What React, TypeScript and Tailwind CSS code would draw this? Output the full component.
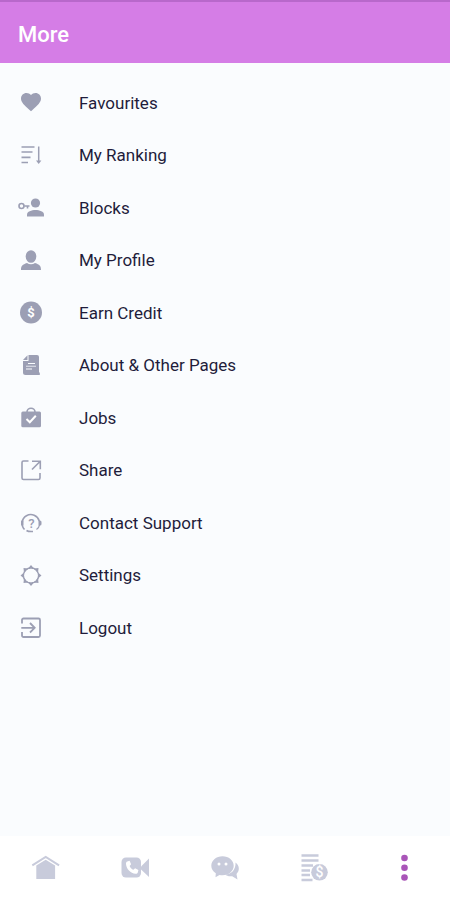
import type { ReactNode } from "react";

interface Item {
  label: string;
  icon: ReactNode;
}

const menuItems: Item[] = [
  {
    label: "Favourites",
    icon: (
      <path
        transform="translate(3 2)"
        d="M12 21.35l-1.45-1.32C5.4 15.36 2 12.28 2 8.5 2 5.42 4.42 3 7.5 3c1.74 0 3.41.81 4.5 2.09C13.09 3.81 14.76 3 16.5 3 19.58 3 22 5.42 22 8.5c0 3.78-3.4 6.86-8.55 11.54z"
      />
    ),
  },
  {
    label: "My Ranking",
    icon: (
      <g>
        <path d="M5.5 6H18.5M5.5 11H16.5M5.5 16.3H14.5M5.5 21.5H12" fill="none" stroke="currentColor" strokeWidth="1.7" />
        <path d="M22.7 5.5V21" fill="none" stroke="currentColor" strokeWidth="1.5" />
        <path d="M20 19.5h5.4l-2.7 3.5z" />
      </g>
    ),
  },
  {
    label: "Blocks",
    icon: (
      <g>
        <circle cx="19.5" cy="10" r="4.6" />
        <path d="M11 23.5v-2c0-3 4.5-4.5 8.5-4.5s8.5 1.5 8.5 4.5v2z" />
        <path d="M8.3 13H13.5M11.5 13V15.5" fill="none" stroke="currentColor" strokeWidth="1.6" />
        <circle cx="5.5" cy="13" r="2.5" fill="none" stroke="currentColor" strokeWidth="1.6" />
      </g>
    ),
  },
  {
    label: "My Profile",
    icon: (
      <g>
        <ellipse cx="15" cy="10.5" rx="5.3" ry="6.3" />
        <path d="M5 24C5 19.5 6.500 18.700 11 17c2.300 1.600 5.700 1.600 8 0 4.500 1.700 6 2.500 6 7z" />
      </g>
    ),
  },
  {
    label: "Earn Credit",
    icon: (
      <g>
        <circle cx="15" cy="14.5" r="11" />
        <text x="15" y="19" textAnchor="middle" className="fill-white text-[13px] font-bold">$</text>
      </g>
    ),
  },
  {
    label: "About & Other Pages",
    icon: (
      <g>
        <path d="M12.500 4H21a2 2 0 0 1 2 2v15.500h.8V24H9.500A2.500 2.500 0 0 1 7 21.500V10h5.500z" />
        <path d="M7 9L11.500 4.300V9z" />
        <path d="M12 12.500H19M10 18H16" fill="none" stroke="#fafcfe" strokeWidth="1" />
        <path d="M10 15.300H20" fill="none" stroke="#fafcfe" strokeWidth="1.300" opacity="0.600" />
      </g>
    ),
  },
  {
    label: "Jobs",
    icon: (
      <g>
        <rect x="5.300" y="7.500" width="19.700" height="15.700" rx="1.500" />
        <path d="M11 8a4 3.800 0 0 1 8 0" fill="none" stroke="currentColor" strokeWidth="1.600" />
        <path d="M10.500 15l3.300 3.200 6-6.400" fill="none" stroke="white" strokeWidth="2" />
      </g>
    ),
  },
  {
    label: "Share",
    icon: (
      <g fill="none" stroke="currentColor" strokeWidth="1.600">
        <path d="M12.500 5H7.500A1.500 1.500 0 0 0 6 6.500v15.500A1.500 1.500 0 0 0 7.500 23.500h15a1.500 1.500 0 0 0 1.500-1.500V17" />
        <path d="M16 5.300h8.300v8M24 5.500L16 13.500" />
      </g>
    ),
  },
  {
    label: "Contact Support",
    icon: (
      <g>
        <path d="M8.500 20.500A8.800 8.800 0 1 1 23.300 12M10.500 21.500q2 1.300 6.500 1" fill="none" stroke="currentColor" strokeWidth="1.600" />
        <path d="M22.500 11.500h1.500a1.500 1.500 0 0 1 1.500 1.500v2a1.500 1.500 0 0 1-1.500 1.500h-1.500zM6 11.500h1.500v5H6a1 1 0 0 1-1-1v-3a1 1 0 0 1 1-1z" />
        <path d="M23.500 16q-.5 3-3 4.500" fill="none" stroke="currentColor" strokeWidth="1.300" />
        <text x="15.500" y="18.500" textAnchor="middle" className="text-[13px] font-medium">?</text>
      </g>
    ),
  },
  {
    label: "Settings",
    icon: (
      <g>
        <circle cx="15" cy="14.500" r="7.500" fill="none" stroke="currentColor" strokeWidth="1.600" />
        <path d="M12 7.500l3-3.500 3 3.500zM12 21.500l3 3.500 3-3.500zM8 11.500l-3.500 3 3.500 3zM22 11.500l3.500 3-3.500 3zM8 12L7.500 7l5 .5zM22 12l.5-5-5 .5zM8 17l-.5 5 5-.5zM22 17l.5 5-5-.5z" />
        <circle cx="15" cy="14.500" r="6.700" fill="#fafcfe" />
      </g>
    ),
  },
  {
    label: "Logout",
    icon: (
      <g fill="none" stroke="currentColor" strokeWidth="1.800">
        <path d="M6 9.500V6A1.500 1.500 0 0 1 7.500 4.500h15A1.500 1.500 0 0 1 24 6v15.500a1.500 1.500 0 0 1-1.500 1.500h-15A1.500 1.500 0 0 1 6 21.500V18" />
        <path d="M5.300 13.800H18.500M14 9L18.700 13.800 14 18.500" />
      </g>
    ),
  },
];

const tabs: Item[] = [
  {
    label: "Home",
    icon: (
      <g>
        <path d="M3.300 13.300L16.700 5l13.400 8.300" fill="none" stroke="currentColor" strokeWidth="2" />
        <path d="M7.300 13.500l9.400-5.700 9.400 5.700V27H7.300z" />
      </g>
    ),
  },
  {
    label: "Calls",
    icon: (
      <g>
        <rect x="2.500" y="5.500" width="19.500" height="20" rx="4.500" />
        <path d="M22 14.500L30 6.500v18.500L22 17.500z" />
        <path d="M8.300 9.500l2.300-.7 1.500 3.500-1.500 1.600c.7 1.800 2 3.100 3.800 3.900l1.700-1.500 3.300 1.600-.6 2.500c-.3 1-1.200 1.500-2.200 1.400C11.500 21.300 7.300 17 7 12c-.1-1.200.3-2.200 1.300-2.500z" fill="white" />
      </g>
    ),
  },
  {
    label: "Chats",
    icon: (
      <g>
        <path d="M26.500 10.500c4 3 4.500 8 1 11.500l1 5.500-5.300-3.300c-3 .5-5.500-.2-7.200-1.700 6.500 0 11-5 10.500-12z" />
        <path d="M13.500 4.300c6.300 0 11.200 4.200 11.200 9.500S19.800 23.300 13.500 23.300c-1 0-2-.1-3-.3L6.500 25.300l.3-4.100C4 19.500 2.300 17 2.300 13.800c0-5.300 5-9.500 11.200-9.500z" />
        <circle cx="10" cy="12" r="1.500" fill="white" />
        <circle cx="17" cy="12" r="1.500" fill="white" />
      </g>
    ),
  },
  {
    label: "Credits",
    icon: (
      <g>
        <path d="M2.500 3.500H19.500M2.500 8.500H19.500M2.500 13.500H14M2.500 18.500H11M2.500 23H11M2.500 28H13.500" fill="none" stroke="currentColor" strokeWidth="2.300" />
        <circle cx="20.500" cy="20.300" r="8.300" />
        <text x="20.500" y="25.300" textAnchor="middle" className="fill-white text-[14px] font-medium">$</text>
      </g>
    ),
  },
  {
    label: "More",
    icon: (
      <g>
        <circle cx="15.500" cy="6" r="3.300" />
        <circle cx="15.500" cy="15.700" r="3.300" />
        <circle cx="15.500" cy="25.500" r="3.300" />
      </g>
    ),
  },
];

export default function App() {
  return (
    <div className="flex min-h-screen flex-col bg-[#fafcfe] font-[Roboto,sans-serif]">
      <header className="flex h-[63px] items-center border-t-2 border-[#b868cb] bg-[#d57de6] px-[18px] pt-[3px]">
        <h1 className="text-[22px] font-medium text-white">More</h1>
      </header>

      <main className="flex-1 pt-[14px]">
        <ul className="grid h-[578px] auto-rows-fr">
          {menuItems.map((item) => (
            <li key={item.label} className="flex">
              <button type="button" className="flex flex-1 items-center gap-[33px] px-4 text-left">
                <svg viewBox="0 0 30 30" className="size-[30px] shrink-0 text-[#9c9fb4]" fill="currentColor" aria-hidden="true">
                  {item.icon}
                </svg>
                <span className="text-[17px] text-[#1f1c3b]">{item.label}</span>
              </button>
            </li>
          ))}
        </ul>
      </main>

      <nav className="grid h-16 grid-cols-5 bg-white">
        {tabs.map((tab) => (
          <button
            key={tab.label}
            type="button"
            aria-label={tab.label}
            className={`flex items-center justify-center ${tab.label === "More" ? "text-[#a955b8]" : "text-[#c8cbdb]"}`}
          >
            <svg viewBox="0 0 32 32" className="size-8" fill="currentColor" aria-hidden="true">
              {tab.icon}
            </svg>
          </button>
        ))}
      </nav>
    </div>
  );
}
